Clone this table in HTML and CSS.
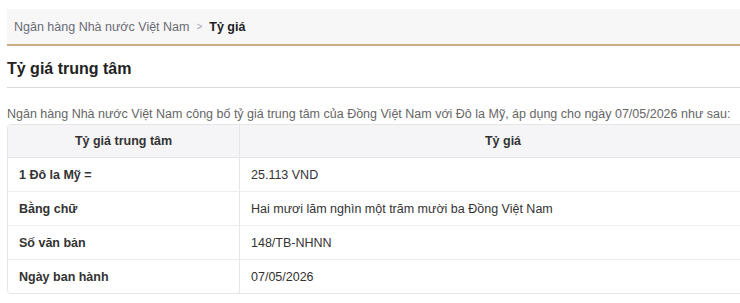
FILE: index.html
```html
<!DOCTYPE html>
<html lang="vi">
<head>
  <meta charset="UTF-8">
  <meta name="viewport" content="width=device-width, initial-scale=1.0">
  <title>Tỷ giá trung tâm</title>
  <link rel="stylesheet" href="styles.css">
</head>
<body>

  <div class="breadcrumb">
    <a href="#" class="crumb">Ngân hàng Nhà nước Việt Nam</a>
    <span class="crumb-sep">&gt;</span>
    <span class="crumb-active">Tỷ giá</span>
  </div>

  <div class="content">
    <h1 class="page-title">Tỷ giá trung tâm</h1>

    <p class="intro">Ngân hàng Nhà nước Việt Nam công bố tỷ giá trung tâm của Đồng Việt Nam với Đô la Mỹ, áp dụng cho ngày 07/05/2026 như sau:</p>

    <table class="rate-table">
      <thead>
        <tr>
          <th class="col-label">Tỷ giá trung tâm</th>
          <th>Tỷ giá</th>
        </tr>
      </thead>
      <tbody>
        <tr>
          <td class="cell-label">1 Đô la Mỹ =</td>
          <td>25.113 VND</td>
        </tr>
        <tr>
          <td class="cell-label">Bằng chữ</td>
          <td>Hai mươi lăm nghìn một trăm mười ba Đồng Việt Nam</td>
        </tr>
        <tr>
          <td class="cell-label">Số văn bản</td>
          <td>148/TB-NHNN</td>
        </tr>
        <tr>
          <td class="cell-label">Ngày ban hành</td>
          <td>07/05/2026</td>
        </tr>
      </tbody>
    </table>
  </div>

</body>
</html>
```

FILE: styles.css
```css
body {
  margin: 0;
  padding: 9px 0 0 7px;
  font-family: "Liberation Sans", Arial, sans-serif;
  color: #222;
  background: #fff;
  width: 760px;
}

/* Breadcrumb */
.breadcrumb {
  display: flex;
  align-items: center;
  height: 35px;
  padding-left: 7px;
  background: #f7f7f8;
  border-bottom: 2px solid #c9ad84;
  font-size: 12.5px;
}

.crumb {
  color: #6b6b75;
  text-decoration: none;
}

.crumb-sep {
  color: #a5a5ad;
  margin: 0 7px;
  font-size: 10px;
}

.crumb-active {
  font-weight: bold;
  color: #222;
}

/* Main content */
.page-title {
  margin: 0;
  padding: 14px 0 9px 0;
  font-size: 16px;
  font-weight: bold;
  color: #222;
  border-bottom: 1px solid #d9d9d9;
}

.intro {
  margin: 19px 0 3px 0;
  font-size: 12.5px;
  color: #666;
}

.rate-table {
  width: 100%;
  border-collapse: separate;
  border-spacing: 0;
  border: 1px solid #e6e6e9;
  border-radius: 4px;
  font-size: 12.5px;
}

.rate-table th {
  height: 32px;
  padding: 0;
  background: #f5f5f7;
  font-weight: bold;
  color: #333;
  text-align: center;
  border-bottom: 1px solid #e6e6e9;
}

.rate-table td {
  height: 33px;
  padding: 0 11px;
  color: #333;
  border-top: 1px solid #eeeef0;
}

.rate-table tbody tr:first-child td {
  border-top: none;
}

.rate-table th:first-child,
.rate-table td:first-child {
  width: 209px;
  border-right: 1px solid #e6e6e9;
}

.cell-label {
  font-weight: bold;
}
```
